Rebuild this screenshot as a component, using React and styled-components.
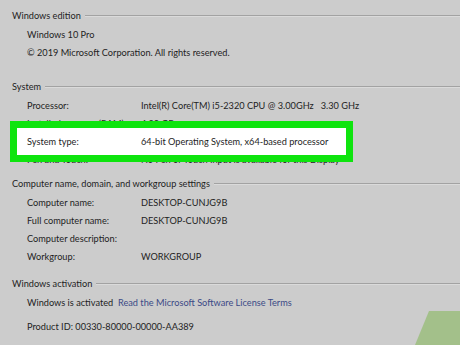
import React from "react";
import styled, { createGlobalStyle } from "styled-components";

const GlobalStyle = createGlobalStyle`
	html, body {
		margin: 0;
		padding: 0;
		background: #cccccc;
	}
	body {
		font-family: "Lato", "Open Sans", sans-serif;
		font-size: 9.2px;
		color: #1e1e1e;
	}
`;

const sections = [
	{
		title: "Windows edition",
		gap: 6,
		rows: [
			{ value: "Windows 10 Pro", full: true },
			{ value: "© 2019 Microsoft Corporation. All rights reserved.", full: true }
		]
	},
	{
		title: "System",
		gap: 16,
		rows: [
			{ label: "Processor:", value: "Intel(R) Core(TM) i5-2320 CPU @ 3.00GHz   3.30 GHz" },
			{ label: "Installed memory (RAM):", value: "4.00 GB" },
			{ label: "System type:", value: "64-bit Operating System, x64-based processor", highlight: true },
			{ label: "Pen and Touch:", value: "No Pen or Touch Input is available for this Display" }
		]
	},
	{
		title: "Computer name, domain, and workgroup settings",
		gap: 6,
		rows: [
			{ label: "Computer name:", value: "DESKTOP-CUNJG9B" },
			{ label: "Full computer name:", value: "DESKTOP-CUNJG9B" },
			{ label: "Computer description:", value: "" },
			{ label: "Workgroup:", value: "WORKGROUP" }
		]
	}
];

const App = () => {
	return (
		<>
			<GlobalStyle />
			<Page>
				{sections.map(section => (
					<Section key={section.title} $gap={section.gap}>
						<Heading>
							<span>{section.title}</span>
						</Heading>
						{section.rows.map((row, i) => (
							<Row key={i} $highlight={row.highlight}>
								{row.highlight && <Highlight />}
								{row.full ? (
									<Text>{row.value}</Text>
								) : (
									<>
										<Label $width={114}>{row.label}</Label>
										<Text>{row.value}</Text>
									</>
								)}
							</Row>
						))}
					</Section>
				))}
				<Section $gap={9}>
					<Heading>
						<span>Windows activation</span>
					</Heading>
					<Row>
						<Label $width={91}>Windows is activated</Label>
						<Link>Read the Microsoft Software License Terms</Link>
					</Row>
					<ProductRow>
						<Text>Product ID: 00330-80000-00000-AA389</Text>
					</ProductRow>
				</Section>
				<Corner viewBox="0 0 46 34" aria-hidden="true">
					<polygon points="15,0 46,0 46,34 1,34" fill="#a3c08a" />
				</Corner>
			</Page>
		</>
	);
};

const Page = styled.div`
	position: relative;
	width: 460px;
	height: 345px;
	overflow: hidden;
`;

const Section = styled.section`
	margin-top: ${p => p.$gap}px;
`;

const Heading = styled.div`
	display: flex;
	align-items: center;
	height: 19px;
	padding-left: 12px;
	gap: 4px;
	white-space: nowrap;

	&::after {
		content: "";
		flex: 1;
		height: 1px;
		background: #a2a2a2;
		box-shadow: 0 1px 0 #dadada;
	}
`;

const Row = styled.div`
	position: relative;
	z-index: ${p => (p.$highlight ? 3 : "auto")};
	display: flex;
	align-items: center;
	height: 18px;
	padding-left: 27px;
	white-space: pre;
`;

const ProductRow = styled(Row)`
	margin-top: 6px;
`;

const Label = styled.span`
	position: relative;
	z-index: 1;
	width: ${p => p.$width}px;
	flex-shrink: 0;
`;

const Text = styled.span`
	position: relative;
	z-index: 1;
`;

const Link = styled.span`
	color: #3b4a86;
`;

const Highlight = styled.div`
	position: absolute;
	z-index: 0;
	left: 10px;
	top: -11px;
	width: 343px;
	height: 41px;
	box-sizing: border-box;
	border: 7px solid #0ee40e;
	background: #ffffff;
`;

const Corner = styled.svg`
	position: absolute;
	right: 0;
	bottom: 0;
	width: 46px;
	height: 34px;
`;

export default App;
